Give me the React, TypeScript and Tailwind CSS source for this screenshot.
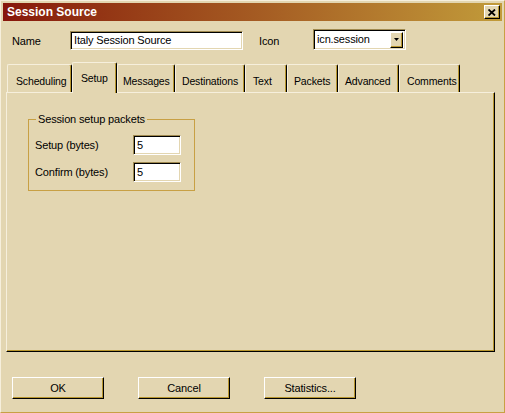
import React from "react";

const tabs = [
  { label: "Scheduling", cls: "w-[65px] pl-[8px]" },
  { label: "Setup", cls: "w-[45px] pl-[8px]", active: true },
  { label: "Messages", cls: "w-[58px] pl-[5px]" },
  { label: "Destinations", cls: "w-[70px] pl-[6px]" },
  { label: "Text", cls: "w-[42px] pl-[7px]" },
  { label: "Packets", cls: "w-[51px] pl-[6px]" },
  { label: "Advanced", cls: "w-[61px] pl-[6px]" },
  { label: "Comments", cls: "w-[61px] pl-[7px]" },
];

function Field({ value, className }: { value: string; className: string }) {
  return (
    <div
      className={`bg-white border border-t-[#a08a50] border-l-[#a08a50] border-r-white border-b-white shadow-[inset_1px_1px_0_#000,inset_-1px_-1px_0_#e3d6b1] flex items-center pl-[3px] ${className}`}
    >
      {value}
    </div>
  );
}

function Btn({ label }: { label: string }) {
  return (
    <button className="w-[92px] h-[22px] flex items-center justify-center border border-t-white border-l-white border-r-black border-b-black shadow-[inset_-1px_-1px_0_#b8962e] bg-[#e3d6b1]">
      {label}
    </button>
  );
}

export default function App() {
  return (
    <div
      className="w-[505px] h-[413px] bg-[#e3d6b1] border border-t-[#f6efdc] border-l-[#f6efdc] border-r-[#c8a044] border-b-[#c8a044] p-[2px] flex flex-col text-[11px] tracking-[-0.15px] text-black"
      style={{ fontFamily: '"Liberation Sans", Arial, sans-serif' }}
    >
      {/* title bar */}
      <div className="h-[18px] bg-linear-to-r from-[#87150b] via-[#a45a22] to-[#c19b3a] flex items-center justify-between pl-[4px] pr-[2px]">
        <span className="text-white font-bold text-[12px] tracking-normal">Session Source</span>
        <div className="w-[16px] h-[14px] bg-[#e3d6b1] border border-t-white border-l-white border-r-black border-b-black shadow-[inset_-1px_-1px_0_#b8962e] flex items-center justify-center">
          <svg width="8" height="7" viewBox="0 0 8 7">
            <path d="M0.5 0.5 L7 6.5 M7 0.5 L0.5 6.5" stroke="#000" strokeWidth="1.8" />
          </svg>
        </div>
      </div>

      {/* name / icon row */}
      <div className="flex items-start mt-[8px] h-[21px]">
        <span className="ml-[9px] mt-[4px] w-[58px]">Name</span>
        <Field value="Italy Session Source" className="mt-[2px] w-[173px] h-[19px]" />
        <span className="ml-[16px] mt-[4px] w-[54px]">Icon</span>
        <div className="w-[93px] h-[21px] bg-white border border-t-[#a08a50] border-l-[#a08a50] border-r-white border-b-white shadow-[inset_1px_1px_0_#000,inset_-1px_-1px_0_#e3d6b1] flex items-center pl-[3px] pr-[2px]">
          <span className="flex-1">icn.session</span>
          <div className="w-[13px] h-[16px] bg-[#e3d6b1] border border-t-white border-l-white border-r-black border-b-black shadow-[inset_-1px_-1px_0_#b8962e] flex items-center justify-center">
            <svg width="5" height="3" viewBox="0 0 5 3">
              <path d="M0 0 H5 L2.5 3 Z" fill="#000" />
            </svg>
          </div>
        </div>
      </div>

      {/* tabs */}
      <div className="flex items-end h-[30px] mt-[12px] ml-[4px] text-[10.5px]">
        {tabs.map((t) =>
          t.active ? (
            <div
              key={t.label}
              className={`${t.cls} relative z-10 h-[31px] -mb-[1px] bg-[#e3d6b1] border-l border-t border-r border-l-[#f6efdc] border-t-[#f6efdc] border-r-black shadow-[inset_-1px_0_0_#b8962e] rounded-t-[2px] flex items-start pt-[8px]`}
            >
              {t.label}
            </div>
          ) : (
            <div
              key={t.label}
              className={`${t.cls} h-[28px] bg-[#e3d6b1] border-l border-t border-r border-l-[#f6efdc] border-t-[#f6efdc] border-r-black shadow-[inset_-1px_0_0_#b8962e] rounded-t-[2px] flex items-start pt-[9px]`}
            >
              {t.label}
            </div>
          )
        )}
      </div>

      {/* panel */}
      <div className="ml-[3px] w-[489px] h-[260px] border border-t-[#f6efdc] border-l-[#f6efdc] border-r-black border-b-black shadow-[inset_-1px_-1px_0_#b8962e] pt-[20px] pl-[21px]">
        <fieldset className="w-[167px] h-[78px] border border-[#c8a044] px-[6px] pt-[9px] m-0">
          <legend className="px-[2px] ml-[1px] leading-[13px]">Session setup packets</legend>
          <div className="flex items-center h-[20px]">
            <span className="w-[98px]">Setup (bytes)</span>
            <Field value="5" className="w-[48px] h-[20px]" />
          </div>
          <div className="flex items-center h-[20px] mt-[7px]">
            <span className="w-[98px]">Confirm (bytes)</span>
            <Field value="5" className="w-[48px] h-[20px]" />
          </div>
        </fieldset>
      </div>

      {/* buttons */}
      <div className="flex gap-[34px] mt-[25px] ml-[9px]">
        <Btn label="OK" />
        <Btn label="Cancel" />
        <Btn label="Statistics..." />
      </div>
    </div>
  );
}
